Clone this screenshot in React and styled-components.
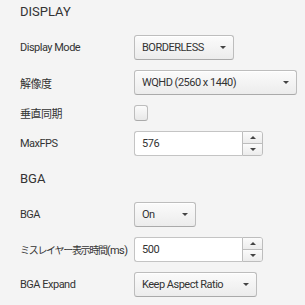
import React from "react";
import styled, { createGlobalStyle } from "styled-components";

const GlobalStyle = createGlobalStyle`
  html, body {
    margin: 0;
    padding: 0;
    background: #f4f4f4;
  }
  body {
    font-family: Roboto, "Noto Sans CJK JP", sans-serif;
    color: #333;
  }
`;

const Page = styled.div`
  width: 305px;
  height: 305px;
  padding: 2px 0 0 20px;
  box-sizing: border-box;
  overflow: hidden;
`;

const Heading = styled.h2`
  margin: 0 0 13px 0;
  height: 20px;
  line-height: 20px;
  font-size: 13px;
  font-weight: normal;
  color: #333;
  &:not(:first-child) {
    margin-top: 13px;
  }
`;

const Form = styled.div`
  display: grid;
  grid-template-columns: 114px auto;
  row-gap: 10px;
  align-items: center;
  justify-items: start;
`;

const Label = styled.span`
  font-size: 11px;
  letter-spacing: -0.5px;
  color: #333;
  white-space: nowrap;
`;

// katakana / kanji part of the long label is drawn condensed
const Condensed = styled.span`
  font-size: 10px;
  letter-spacing: -1.3px;
`;

const Combo = styled.div`
  width: ${p => p.width}px;
  height: 25px;
  box-sizing: border-box;
  display: flex;
  align-items: center;
  justify-content: space-between;
  padding: 0 7px 0 7px;
  border: 1px solid #bdbdbd;
  border-bottom-color: #aaa;
  border-radius: 3px;
  background: linear-gradient(#fbfbfb, #ececec);
  box-shadow: inset 0 1px 0 #fff;
  font-size: 11px;
  letter-spacing: -0.5px;
  color: #333;
`;

const Arrow = styled.span`
  width: 0;
  height: 0;
  border-left: 3px solid transparent;
  border-right: 3px solid transparent;
  border-${p => (p.up ? "bottom" : "top")}: 3.5px solid #444;
`;

const CheckBox = styled.div`
  width: 14px;
  height: 16px;
  box-sizing: border-box;
  border: 1px solid #bdbdbd;
  border-bottom-color: #aaa;
  border-radius: 3px;
  background: linear-gradient(#fbfbfb, #e8e8e8);
`;

const Spinner = styled.div`
  width: 129px;
  height: 25px;
  display: flex;
`;

const SpinField = styled.div`
  flex: 1;
  box-sizing: border-box;
  display: flex;
  align-items: center;
  padding-left: 7px;
  background: #fff;
  border: 1px solid #c4c4c4;
  border-right: none;
  border-radius: 3px 0 0 3px;
  font-size: 11px;
  letter-spacing: -0.4px;
  color: #333;
`;

const SpinButtons = styled.div`
  width: 21px;
  display: flex;
  flex-direction: column;
  box-sizing: border-box;
  border: 1px solid #bdbdbd;
  border-radius: 0 3px 3px 0;
  overflow: hidden;
`;

const SpinButton = styled.div`
  flex: 1;
  display: flex;
  align-items: center;
  justify-content: center;
  background: linear-gradient(#fbfbfb, #ececec);
  & + & {
    border-top: 1px solid #bdbdbd;
  }
`;

const ComboBox = ({ width, value }) => (
  <Combo width={width}>
    <span>{value}</span>
    <Arrow />
  </Combo>
);

const NumberSpinner = ({ value }) => (
  <Spinner>
    <SpinField>{value}</SpinField>
    <SpinButtons>
      <SpinButton><Arrow up /></SpinButton>
      <SpinButton><Arrow /></SpinButton>
    </SpinButtons>
  </Spinner>
);

export default function App() {
  return (
    <>
      <GlobalStyle />
      <Page>
        <Heading>DISPLAY</Heading>
        <Form>
          <Label>Display Mode</Label>
          <ComboBox width={100} value="BORDERLESS" />
          <Label>解像度</Label>
          <ComboBox width={163} value="WQHD (2560 x 1440)" />
          <Label>垂直同期</Label>
          <CheckBox />
          <Label>MaxFPS</Label>
          <NumberSpinner value="576" />
        </Form>
        <Heading>BGA</Heading>
        <Form>
          <Label>BGA</Label>
          <ComboBox width={62} value="On" />
          <Label><Condensed>ミスレイヤー表示時間</Condensed>(ms)</Label>
          <NumberSpinner value="500" />
          <Label>BGA Expand</Label>
          <ComboBox width={123} value="Keep Aspect Ratio" />
        </Form>
      </Page>
    </>
  );
}
